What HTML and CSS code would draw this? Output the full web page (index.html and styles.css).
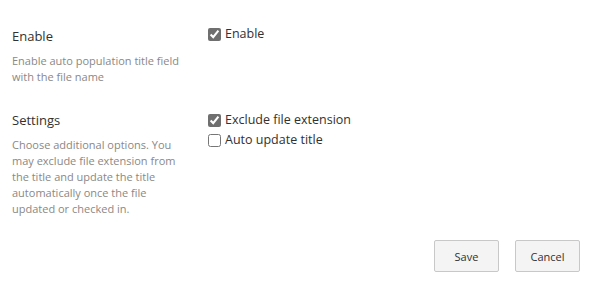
FILE: index.html
```html
<!DOCTYPE html>
<html lang="en">
<head>
  <meta charset="UTF-8" />
  <title>Title settings</title>
  <link rel="stylesheet" href="styles.css">
</head>
<body>
  <div class="panel">
    <section class="row">
      <div class="info">
        <h3 class="title">Enable</h3>
        <p class="desc">Enable auto population title field with the file name</p>
      </div>
      <div class="options">
        <label class="check"><input type="checkbox" checked /> Enable</label>
      </div>
    </section>

    <section class="row">
      <div class="info">
        <h3 class="title">Settings</h3>
        <p class="desc">Choose additional options. You may exclude file extension from the title and update the title automatically once the file updated or checked in.</p>
      </div>
      <div class="options options-list">
        <label class="check"><input type="checkbox" checked /> Exclude file extension</label>
        <label class="check"><input type="checkbox" /> Auto update title</label>
      </div>
    </section>

    <div class="actions">
      <button type="button">Save</button>
      <button type="button">Cancel</button>
    </div>
  </div>
</body>
</html>
```

FILE: styles.css
```css
* {
  margin: 0;
  padding: 0;
  box-sizing: border-box;
}
body {
  font-family: 'Open Sans', 'Noto Sans', sans-serif;
  background: #ffffff;
  color: #323130;
}
.panel {
  padding: 25px 23px 0 12px;
}
.row {
  display: flex;
  margin-bottom: 24px;
}
.row:last-of-type {
  margin-bottom: 23px;
}
.info {
  width: 180px;
  margin-right: 16px;
}
.title {
  font-size: 13px;
  font-weight: 400;
  line-height: 20px;
  margin-top: 1px;
  margin-bottom: 7px;
}
.desc {
  font-size: 11px;
  line-height: 16px;
  color: #8a8886;
}
.options {
  display: flex;
  flex-direction: column;
  gap: 2px;
}
.options-list {
  padding-top: 2px;
}
.check {
  display: flex;
  align-items: center;
  font-size: 12.5px;
  line-height: 18px;
}
.check input {
  width: 13px;
  height: 13px;
  margin: 0 4px 0 0;
  accent-color: #6f6f6f;
}
.actions {
  display: flex;
  justify-content: flex-end;
  gap: 16px;
}
.actions button {
  width: 65px;
  height: 32px;
  font-family: inherit;
  font-size: 11px;
  color: #323130;
  background: #f4f4f4;
  border: 1px solid #c8c8c8;
  border-radius: 2px;
}
```
